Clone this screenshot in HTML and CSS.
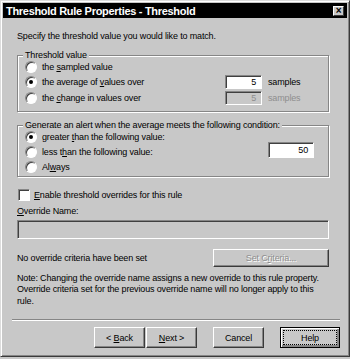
FILE: index.html
```html
<!DOCTYPE html>
<html>
<head>
  <meta charset="UTF-8">
  <title>Threshold Rule Properties</title>
  <link rel="stylesheet" href="styles.css">
</head>
<body>
  <div class="window">
    <div class="titlebar">
      <span class="title">Threshold Rule Properties - Threshold</span>
      <span class="close-btn">×</span>
    </div>

    <div class="content">
      <p class="intro">Specify the threshold value you would like to match.</p>

      <div class="group group-threshold">
        <span class="legend">Threshold value</span>
        <div class="opt-row">
          <label class="choice"><span class="radio"></span><span>the <u>s</u>ampled value</span></label>
        </div>
        <div class="opt-row">
          <label class="choice"><span class="radio checked"></span><span>the average of <u>v</u>alues over</span></label>
          <span class="field">5</span>
          <span class="unit">samples</span>
        </div>
        <div class="opt-row">
          <label class="choice"><span class="radio"></span><span>the <u>c</u>hange in values over</span></label>
          <span class="field disabled">5</span>
          <span class="unit disabled">samples</span>
        </div>
      </div>

      <div class="group group-condition">
        <span class="legend">Generate an alert when the average meets the following condition:</span>
        <label class="choice"><span class="radio checked"></span><span>greater <u>t</u>han the following value:</span></label>
        <span class="field field-value">50</span>
        <label class="choice"><span class="radio"></span><span>less t<u>h</u>an the following value:</span></label>
        <label class="choice"><span class="radio"></span><span>Al<u>w</u>ays</span></label>
      </div>

      <label class="check-row"><span class="checkbox"></span><span><u>E</u>nable threshold overrides for this rule</span></label>

      <div class="override">
        <span class="override-label"><u>O</u>verride Name:</span>
        <span class="field field-wide disabled"></span>
      </div>

      <div class="criteria-row">
        <span>No override criteria have been set</span>
        <span class="button disabled criteria-btn"><span>Set C<u>r</u>iteria...</span></span>
      </div>

      <p class="note">Note: Changing the override name assigns a new override to this rule property. Override criteria set for the previous override name will no longer apply to this rule.</p>
    </div>

    <div class="footer">
      <div class="separator"></div>
      <div class="button-row">
        <div class="nav-pair">
          <span class="button"><span>&lt; <u>B</u>ack</span></span>
          <span class="button"><span><u>N</u>ext &gt;</span></span>
        </div>
        <span class="button">Cancel</span>
        <span class="button default"><span class="focus">Help</span></span>
      </div>
    </div>
  </div>
</body>
</html>
```

FILE: styles.css
```css
:root {
  --face: #c8c8c8;
  --light: #ffffff;
  --shadow: #868686;
  --dark: #3a3a3a;
  --text: #000000;
  --text-disabled: #8e8e8e;
}

body {
  margin: 0;
  background: var(--face);
  font-family: 'Liberation Sans', Arial, sans-serif;
  font-size: 9px;
  letter-spacing: -0.15px;
  color: var(--text);
}

.window {
  width: 350px;
  height: 357px;
  box-sizing: border-box;
  border: 1px solid;
  border-color: #dcdcdc var(--dark) var(--dark) #dcdcdc;
  box-shadow: inset 1px 1px var(--light), inset -1px -1px var(--shadow);
  display: flex;
  flex-direction: column;
}

.titlebar {
  margin: 2px 2px 0 2px;
  height: 15px;
  background: #000;
  display: flex;
  align-items: center;
  justify-content: space-between;
  padding: 0 3px 0 3px;
}

.title {
  color: #fff;
  font-weight: bold;
  font-size: 11px;
  letter-spacing: -0.3px;
}

.close-btn {
  width: 11px;
  height: 10px;
  box-sizing: border-box;
  background: var(--face);
  border: 1px solid;
  border-color: var(--light) var(--dark) var(--dark) var(--light);
  font-size: 10px;
  font-weight: bold;
  line-height: 8px;
  text-align: center;
}

.content {
  padding: 0 20px 0 16px;
  display: flex;
  flex-direction: column;
}

.intro {
  margin: 13px 0 0 0;
  line-height: 11px;
}

u {
  text-decoration-thickness: 1px;
  text-underline-offset: 1px;
}

/* etched group box */
.group {
  position: relative;
  border: 1px solid var(--shadow);
  box-shadow: inset 1px 1px var(--light), 1px 1px var(--light);
}

.legend {
  position: absolute;
  top: -6px;
  left: 5px;
  padding: 0 2px;
  line-height: 11px;
  background: var(--face);
}

.group-threshold {
  margin-top: 13px;
  padding: 3px 4px 5px 7px;
}

.opt-row {
  display: grid;
  grid-template-columns: 1fr 37px 62px;
  align-items: center;
  height: 15.5px;
}

.choice {
  display: flex;
  align-items: center;
  gap: 5px;
  height: 15px;
}

.radio {
  width: 12px;
  height: 12px;
  box-sizing: border-box;
  border-radius: 50%;
  border: 1px solid;
  border-color: var(--shadow) var(--light) var(--light) var(--shadow);
  background: #fff;
  box-shadow: inset 1px 1px #404040;
  position: relative;
}

.radio.checked::after {
  content: '';
  position: absolute;
  left: 3px;
  top: 3px;
  width: 4px;
  height: 4px;
  border-radius: 50%;
  background: #000;
}

.field {
  height: 14px;
  box-sizing: border-box;
  background: #fff;
  border: 1px solid;
  border-color: var(--shadow) var(--light) var(--light) var(--shadow);
  box-shadow: inset 1px 1px #404040;
  text-align: right;
  padding-right: 5px;
  line-height: 12px;
}

.field.disabled {
  background: var(--face);
  color: var(--text-disabled);
}

.unit {
  padding-left: 6px;
}

.unit.disabled {
  color: var(--text-disabled);
}

.group-condition {
  margin-top: 13px;
  padding: 4px 14px 1px 7px;
  display: grid;
  grid-template-columns: 1fr 46px;
}

.field-value {
  grid-column: 2;
  grid-row: 1 / 3;
  align-self: end;
  height: 16px;
  margin-bottom: 2px;
  line-height: 14px;
}

.check-row {
  margin-top: 11px;
  display: flex;
  align-items: center;
  gap: 4px;
  height: 14px;
}

.checkbox {
  width: 12px;
  height: 12px;
  box-sizing: border-box;
  border: 1px solid;
  border-color: var(--shadow) var(--light) var(--light) var(--shadow);
  box-shadow: inset 1px 1px #404040;
  background: #fff;
  margin-left: 1px;
}

.override {
  display: flex;
  flex-direction: column;
  margin-top: 4px;
  gap: 3px;
}

.override-label {
  line-height: 11px;
}

.field-wide {
  height: 19px;
}

.criteria-row {
  margin-top: 10px;
  display: flex;
  align-items: center;
  justify-content: space-between;
}

.button {
  display: flex;
  align-items: center;
  justify-content: center;
  height: 21px;
  box-sizing: border-box;
  background: var(--face);
  border: 1px solid;
  border-color: var(--light) var(--dark) var(--dark) var(--light);
  box-shadow: inset -1px -1px var(--shadow);
}

.button.disabled {
  color: var(--text-disabled);
  text-shadow: 1px 1px var(--light);
}

.criteria-btn {
  width: 116px;
  height: 18px;
}

.note {
  margin: 6px 0 0 0;
  line-height: 11.5px;
}

.footer {
  margin-top: auto;
  padding: 0 9px 8px 11px;
}

.separator {
  border-top: 1px solid var(--shadow);
  border-bottom: 1px solid var(--light);
}

.button-row {
  margin-top: 6px;
  display: flex;
  justify-content: flex-end;
  gap: 16px;
}

.nav-pair {
  display: flex;
  gap: 1px;
}

.nav-pair .button,
.button-row > .button {
  width: 51px;
}

.button-row > .button.default {
  width: 60px;
  border: 1px solid #000;
  box-shadow: inset 1px 1px var(--light), inset -2px -2px var(--shadow);
}

.focus {
  display: flex;
  align-items: center;
  justify-content: center;
  width: 52px;
  height: 13px;
  border: 1px dotted #000;
}
```
